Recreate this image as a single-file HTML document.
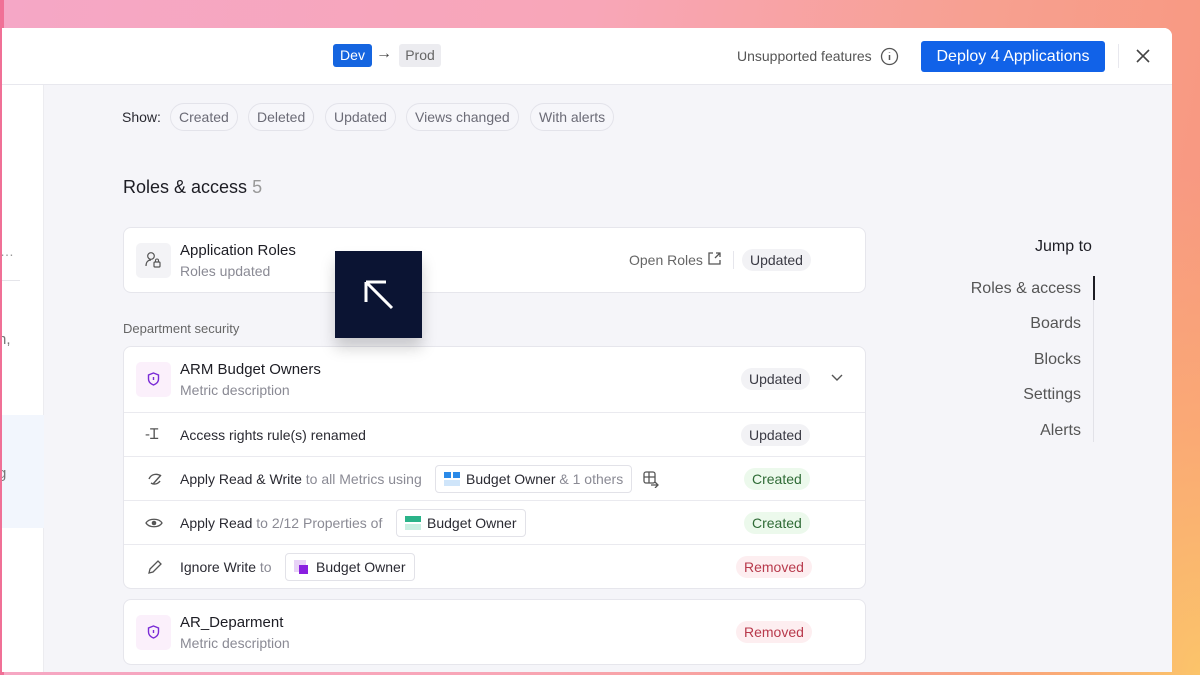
<!DOCTYPE html>
<html><head><meta charset="utf-8"><style>
*{box-sizing:border-box;margin:0;padding:0}
body{width:1200px;height:675px;overflow:hidden;font-family:"Liberation Sans",sans-serif;position:relative;
background:radial-gradient(ellipse 300px 500px at 1200px 675px,#fbc46a 0%,rgba(251,180,110,.6) 50%,rgba(248,160,130,0) 100%),linear-gradient(100deg,#f5a7c6 0%,#f8a6b8 45%,#f7a090 75%,#f8967c 100%);}
.bgl{position:absolute;left:0;top:0;width:4px;height:675px;background:#f07096}
.panel{position:absolute;left:2px;top:28px;width:1170px;height:644px;background:#f5f5f9;border-radius:0 8px 0 0;overflow:hidden}
.hdr{position:absolute;left:0;top:0;width:1170px;height:57px;background:#fff;border-bottom:1px solid #e8e8ee}
.side{position:absolute;left:0;top:57px;width:42px;height:600px;background:#fff;border-right:1px solid #ececf0}
.a{position:absolute;white-space:nowrap}
.chip{position:absolute;height:28px;border:1px solid #e3e3ea;border-radius:14px;font-size:14px;color:#6b6b76;line-height:26px;padding:0 8px;background:#f6f6fa}
.card{position:absolute;left:121px;width:743px;background:#fff;border:1px solid #e6e6ec;border-radius:8px}
.t{font-size:15px;color:#1d1d24}
.s{font-size:14px;color:#8a8a94}
.badge{position:absolute;height:22px;border-radius:11px;font-size:14px;line-height:22px;padding:0 8px}
.up{background:#f2f2f5;color:#3a3a44}
.cr{background:#ecf9ec;color:#2f6b36}
.rm{background:#fdeef0;color:#b83a4c}
.ic{position:absolute;width:35px;height:35px;border-radius:5px;background:#f3f3f6}
.row{position:absolute;left:0;width:741px;border-top:1px solid #eaeaef;height:44px}
.r14{font-size:14px;color:#2a2a32}
.g{color:#8a8a94}
.pill{position:absolute;height:28px;border:1px solid #e2e2e8;border-radius:4px;background:#fff;font-size:14px;line-height:26px;color:#2a2a32;padding:0 8px 0 30px}
</style></head><body>
<div class="bgl"></div>
<div class="panel">
 <div class="hdr">
  <div class="a" style="left:331px;top:16px;width:39px;height:23px;background:#1565e0;border-radius:3px;color:#fff;font-size:14px;line-height:23px;text-align:center">Dev</div>
  <div class="a" style="left:374px;top:17px;font-size:16px;color:#444">→</div>
  <div class="a" style="left:397px;top:16px;width:42px;height:23px;background:#ececf0;border-radius:3px;color:#666;font-size:14px;line-height:23px;text-align:center">Prod</div>
  <div class="a" style="left:735px;top:20px;font-size:14px;color:#555">Unsupported features</div>
  <svg class="a" style="left:878px;top:19px" width="19" height="19" viewBox="0 0 19 19"><circle cx="9.5" cy="9.5" r="8" fill="none" stroke="#555" stroke-width="1.3"/><path d="M9.5 8v5M9.5 5.3v.5" stroke="#555" stroke-width="1.5"/></svg>
  <div class="a" style="left:919px;top:13px;width:184px;height:31px;background:#1162e8;border-radius:3px;color:#fff;font-size:16px;line-height:31px;text-align:center">Deploy 4 Applications</div>
  <div class="a" style="left:1116px;top:16px;width:1px;height:24px;background:#e8e8ee"></div>
  <svg class="a" style="left:1133px;top:20px" width="16" height="16"><path d="M2 2L14 14M14 2L2 14" stroke="#444" stroke-width="1.6"/></svg>
 </div>
 <div class="side">
  <div class="a" style="left:-2px;top:158px;font-size:14px;color:#999">…</div>
  <div class="a" style="left:0;top:195px;width:18px;height:1px;background:#e5e5ea"></div>
  <div class="a" style="left:-4px;top:246px;font-size:15px;color:#777">n,</div>
  <div class="a" style="left:0;top:330px;width:42px;height:113px;background:#f2f6fd"></div>
  <div class="a" style="left:-4px;top:380px;font-size:15px;color:#777">g</div>
 </div>
 <div class="a" style="left:120px;top:81px;font-size:14px;color:#2a2a32">Show:</div>
 <div class="chip" style="left:168px;top:75px">Created</div>
 <div class="chip" style="left:246px;top:75px">Deleted</div>
 <div class="chip" style="left:323px;top:75px">Updated</div>
 <div class="chip" style="left:404px;top:75px">Views changed</div>
 <div class="chip" style="left:528px;top:75px">With alerts</div>
 <div class="a" style="left:121px;top:149px;font-size:18px;color:#1d1d24">Roles &amp; access <span style="color:#999">5</span></div>

 <div class="card" style="top:199px;height:66px">
  <div class="ic" style="left:12px;top:15px"><svg width="35" height="35"><circle cx="15" cy="13" r="3.3" fill="none" stroke="#555" stroke-width="1.2"/><path d="M10 23c0-4 2-6 5-6" fill="none" stroke="#555" stroke-width="1.2"/><rect x="18" y="19" width="6" height="5" rx="1" fill="none" stroke="#555" stroke-width="1.2"/><path d="M19.5 19v-1.5a1.5 1.5 0 013 0V19" fill="none" stroke="#555" stroke-width="1.1"/></svg></div>
  <div class="a t" style="left:56px;top:14px">Application Roles</div>
  <div class="a s" style="left:56px;top:35px">Roles updated</div>
  <div class="a" style="left:505px;top:24px;font-size:14px;color:#666">Open Roles</div>
  <svg class="a" style="left:583px;top:23px" width="15" height="15"><path d="M6 2H2v11h11V9M8 7l5-5M9 2h4v4" fill="none" stroke="#555" stroke-width="1.3"/></svg>
  <div class="a" style="left:609px;top:23px;width:1px;height:18px;background:#e6e6ec"></div>
  <div class="badge up" style="left:618px;top:21px">Updated</div>
 </div>
 <div class="a" style="left:121px;top:293px;font-size:13px;color:#666">Department security</div>

 <div class="card" style="top:318px;height:243px">
  <div class="ic" style="left:12px;top:15px;background:#fbf0fb"><svg width="35" height="35"><path d="M17.5 11l5 2v4c0 3-2.5 5-5 6-2.5-1-5-3-5-6v-4z" fill="none" stroke="#7a2bd6" stroke-width="1.4"/><path d="M17.5 15v3" stroke="#7a2bd6" stroke-width="1.4"/></svg></div>
  <div class="a t" style="left:56px;top:14px">ARM Budget Owners</div>
  <div class="a s" style="left:56px;top:35px">Metric description</div>
  <div class="badge up" style="left:617px;top:21px">Updated</div>
  <svg class="a" style="left:706px;top:26px" width="14" height="10"><path d="M2 2l5 5 5-5" fill="none" stroke="#555" stroke-width="1.4"/></svg>
  <div class="row" style="top:65px">
   <div class="a" style="left:21px;top:11px;font-size:15px;color:#555">-Ɪ</div>
   <div class="a r14" style="left:56px;top:14px">Access rights rule(s) renamed</div>
   <div class="badge up" style="left:617px;top:11px">Updated</div>
  </div>
  <div class="row" style="top:109px">
   <svg class="a" style="left:22px;top:13px" width="18" height="18"><path d="M3 9c2-5 8-6 12-3M5 13c3 2 7 1 9-2M7 14l8-9" fill="none" stroke="#555" stroke-width="1.4"/></svg>
   <div class="a r14" style="left:56px;top:14px">Apply Read &amp; Write <span class="g">to all Metrics using</span></div>
   <div class="pill" style="left:311px;top:8px">Budget Owner <span class="g">&amp; 1 others</span>
     <svg class="a" style="left:8px;top:6px" width="16" height="14"><rect x="0" y="0" width="7" height="6" fill="#2b8ae8"/><rect x="9" y="0" width="7" height="6" fill="#2b8ae8"/><rect x="0" y="8" width="16" height="6" fill="#cfe5fa"/></svg></div>
   <svg class="a" style="left:518px;top:13px" width="18" height="18"><rect x="2" y="2" width="11" height="11" rx="2" fill="none" stroke="#555" stroke-width="1.3"/><path d="M2 7h11M7 2v11M9 15h7M13 12l3 3-3 3" fill="none" stroke="#555" stroke-width="1.3"/></svg>
   <div class="badge cr" style="left:620px;top:11px">Created</div>
  </div>
  <div class="row" style="top:153px">
   <svg class="a" style="left:21px;top:13px" width="18" height="18"><path d="M1 9c3-5 13-5 16 0-3 5-13 5-16 0z" fill="none" stroke="#555" stroke-width="1.3"/><circle cx="9" cy="9" r="2.3" fill="#555"/></svg>
   <div class="a r14" style="left:56px;top:14px">Apply Read <span class="g">to 2/12 Properties of</span></div>
   <div class="pill" style="left:272px;top:8px">Budget Owner
     <svg class="a" style="left:8px;top:6px" width="16" height="14"><rect width="16" height="6" fill="#2bb389"/><rect y="8" width="16" height="6" fill="#c9efe2"/></svg></div>
   <div class="badge cr" style="left:620px;top:11px">Created</div>
  </div>
  <div class="row" style="top:197px">
   <svg class="a" style="left:22px;top:13px" width="18" height="18"><path d="M3 15l1-4 8-8 3 3-8 8z" fill="none" stroke="#555" stroke-width="1.3"/></svg>
   <div class="a r14" style="left:56px;top:14px">Ignore Write <span class="g">to</span></div>
   <div class="pill" style="left:161px;top:8px">Budget Owner
     <svg class="a" style="left:8px;top:6px" width="16" height="16"><rect width="12" height="12" fill="#e8d2f7"/><rect x="5" y="5" width="9" height="9" fill="#8a1fe0"/></svg></div>
   <div class="badge rm" style="left:612px;top:11px">Removed</div>
  </div>
 </div>

 <div class="card" style="top:571px;height:66px">
  <div class="ic" style="left:12px;top:15px;background:#fbf0fb"><svg width="35" height="35"><path d="M17.5 11l5 2v4c0 3-2.5 5-5 6-2.5-1-5-3-5-6v-4z" fill="none" stroke="#7a2bd6" stroke-width="1.4"/><path d="M17.5 15v3" stroke="#7a2bd6" stroke-width="1.4"/></svg></div>
  <div class="a t" style="left:56px;top:14px">AR_Deparment</div>
  <div class="a s" style="left:56px;top:35px">Metric description</div>
  <div class="badge rm" style="left:612px;top:21px">Removed</div>
 </div>

 <div class="a" style="left:1033px;top:210px;font-size:16px;color:#1d1d24">Jump to</div>
 <div class="a" style="left:1091px;top:248px;width:1px;height:166px;background:#e2e2e8"></div>
 <div class="a" style="left:1091px;top:248px;width:2px;height:24px;background:#1d1d24"></div>
 <div class="a" style="right:91px;top:252px;font-size:16px;color:#555">Roles &amp; access</div>
 <div class="a" style="right:91px;top:287px;font-size:16px;color:#555">Boards</div>
 <div class="a" style="right:91px;top:323px;font-size:16px;color:#555">Blocks</div>
 <div class="a" style="right:91px;top:358px;font-size:16px;color:#555">Settings</div>
 <div class="a" style="right:91px;top:394px;font-size:16px;color:#555">Alerts</div>
</div>
<div class="a" style="left:335px;top:251px;width:87px;height:87px;background:#0b1433;box-shadow:0 10px 14px rgba(0,0,0,.18)">
 <svg width="87" height="87"><path d="M57 57L31 31M31 31h20M31 31v20" fill="none" stroke="#fff" stroke-width="3"/></svg>
</div>
</body></html>
